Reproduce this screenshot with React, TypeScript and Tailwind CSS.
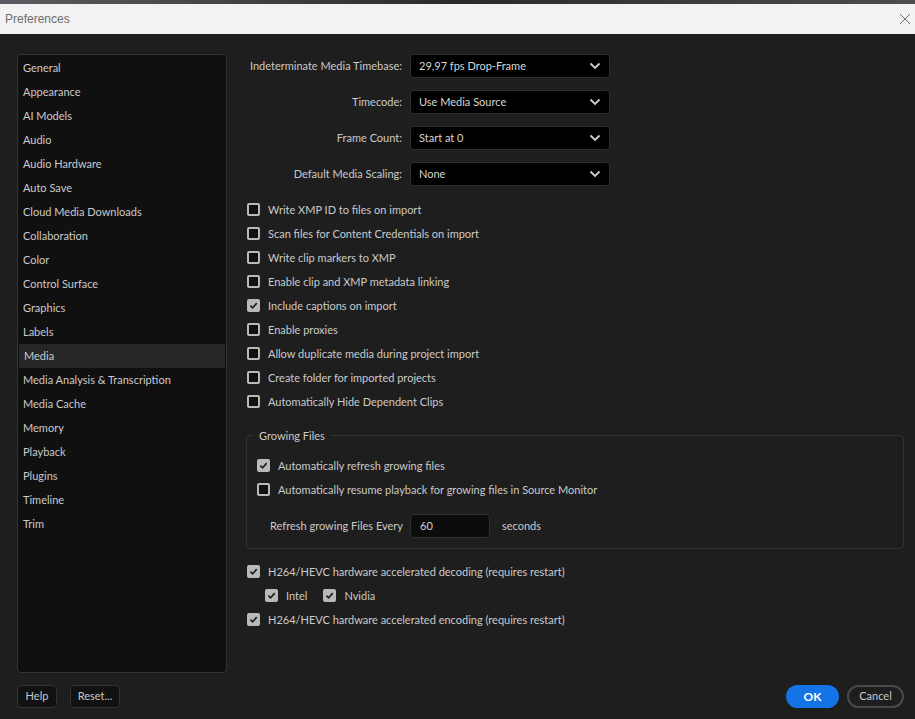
import React from "react";

const sidebar = [
  "General","Appearance","AI Models","Audio","Audio Hardware","Auto Save","Cloud Media Downloads","Collaboration","Color","Control Surface","Graphics","Labels","Media","Media Analysis & Transcription","Media Cache","Memory","Playback","Plugins","Timeline","Trim",
];

function Box({ checked }: { checked?: boolean }) {
  return checked ? (
    <span className="flex h-[13px] w-[13px] shrink-0 items-center justify-center rounded-[2px] bg-[#b9b9b9]">
      <svg width="9" height="9" viewBox="0 0 10 10"><path d="M1.5 5.2 L4 7.6 L8.6 2.4" fill="none" stroke="#1e1e1e" strokeWidth="1.8" /></svg>
    </span>
  ) : (
    <span className="block h-[13px] w-[13px] shrink-0 rounded-[2px] border-2 border-[#b9b9b9] bg-[#111]" />
  );
}

function Check({ label, checked }: { label: string; checked?: boolean }) {
  return (
    <div className="flex h-6 items-center gap-[8px] whitespace-nowrap">
      <Box checked={checked} />
      <span className="pt-[2px]">{label}</span>
    </div>
  );
}

function Select({ label, value }: { label: string; value: string }) {
  return (
    <div className="flex h-9 items-center whitespace-nowrap">
      <div className="w-[163px] pr-[8px] pt-[2px] text-right">{label}</div>
      <div className="flex h-[24px] w-[200px] items-center justify-between rounded-[4px] border border-[#2e2e2e] bg-black pl-[8px] pr-[8px] text-[#d6d6d6]">
        <span className="pt-[2px]">{value}</span>
        <svg width="12" height="8" viewBox="0 0 12 8"><path d="M1.5 1.5 L6 6 L10.5 1.5" fill="none" stroke="#cfcfcf" strokeWidth="1.8" /></svg>
      </div>
    </div>
  );
}

export default function App() {
  return (
    <div className="flex h-[719px] w-[915px] flex-col overflow-hidden bg-[#1e1e1e] text-[11px] text-[#cacaca]" style={{ fontFamily: 'Lato, "Noto Sans", sans-serif' }}>
      <div className="h-[4px] bg-gradient-to-r from-[#5a5e62] via-[#2c2a26] to-[#4b4d4e]" />
      <div className="flex h-[30px] items-center justify-between bg-[#f2f2f2] pl-[5px] pr-[4px] text-[#6e6e6e]">
        <span className="text-[12px]" style={{ fontFamily: '"Liberation Sans", sans-serif' }}>Preferences</span>
        <svg width="12" height="12" viewBox="0 0 12 12"><path d="M1 1 L11 11 M11 1 L1 11" stroke="#6e6e6e" strokeWidth="1" /></svg>
      </div>
      <div className="flex flex-1 gap-[19px] pl-[17px] pr-[11px] pt-[20px]">
        <div className="h-[619px] w-[210px] shrink-0 rounded-[4px] border border-[#333] bg-[#101010] pt-[1px]">
          {sidebar.map((s) => (
            <div key={s} className={`flex h-6 items-center pl-[5px] pt-[2px] ${s === "Media" ? "mx-[1px] bg-[#262626] pl-[4px]" : ""}`}>{s}</div>
          ))}
        </div>
        <div className="flex flex-1 flex-col">
          <div className="-mt-[6px] pl-[1px]">
            <Select label="Indeterminate Media Timebase:" value="29,97 fps Drop-Frame" />
            <Select label="Timecode:" value="Use Media Source" />
            <Select label="Frame Count:" value="Start at 0" />
            <Select label="Default Media Scaling:" value="None" />
          </div>
          <div className="mt-[6px] pl-[1px]">
            <Check label="Write XMP ID to files on import" />
            <Check label="Scan files for Content Credentials on import" />
            <Check label="Write clip markers to XMP" />
            <Check label="Enable clip and XMP metadata linking" />
            <Check label="Include captions on import" checked />
            <Check label="Enable proxies" />
            <Check label="Allow duplicate media during project import" />
            <Check label="Create folder for imported projects" />
            <Check label="Automatically Hide Dependent Clips" />
          </div>
          <div className="relative mt-[21px] h-[114px] rounded-[4px] border border-[#333] pl-[10px] pt-[18px]">
            <span className="absolute -top-[8px] left-[6px] bg-[#1e1e1e] px-[6px]">Growing Files</span>
            <Check label="Automatically refresh growing files" checked />
            <Check label="Automatically resume playback for growing files in Source Monitor" />
            <div className="mt-[12px] flex items-center pl-[13px] whitespace-nowrap">
              <span className="w-[140px] pt-[2px]">Refresh growing Files Every</span>
              <div className="flex h-[24px] w-[80px] items-center rounded-[4px] border border-[#2e2e2e] bg-[#0c0c0c] pl-[9px] pt-[2px] text-[#d6d6d6]">60</div>
              <span className="ml-[12px] pt-[2px]">seconds</span>
            </div>
          </div>
          <div className="mt-[11px] pl-[1px]">
            <Check label="H264/HEVC hardware accelerated decoding (requires restart)" checked />
            <div className="flex h-6 items-center gap-[16px] pl-[18px]">
              <Check label="Intel" checked />
              <Check label="Nvidia" checked />
            </div>
            <Check label="H264/HEVC hardware accelerated encoding (requires restart)" checked />
          </div>
        </div>
      </div>
      <div className="flex h-[47px] items-start justify-between pl-[17px] pr-[11px] pt-[12px]">
        <div className="flex gap-[13px]">
          <button className="h-[23px] w-[40px] rounded-[4px] border border-[#333] bg-[#111] pt-[1px] text-[#c8c8c8]">Help</button>
          <button className="h-[23px] w-[50px] rounded-[4px] border border-[#333] bg-[#111] pt-[1px] text-[#c8c8c8]">Reset...</button>
        </div>
        <div className="flex gap-[8px]">
          <button className="h-[23px] w-[53px] rounded-full bg-[#1473e6] pt-[1px] text-[12px] font-bold text-white">OK</button>
          <button className="h-[23px] w-[57px] rounded-full border-2 border-[#4a4a4a] pt-[1px] text-[#c8c8c8]">Cancel</button>
        </div>
      </div>
    </div>
  );
}
